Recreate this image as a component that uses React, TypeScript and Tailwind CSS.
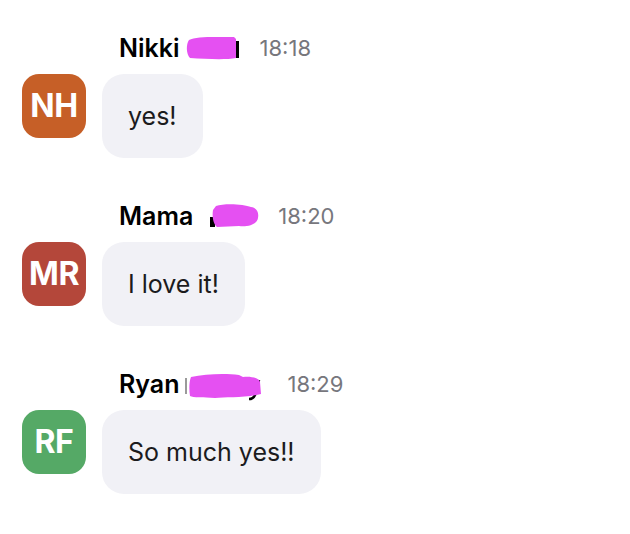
import React from "react";

type Msg = {
  initials: string;
  avatar: string;
  first: string;
  surnameW: number;
  redact: React.ReactNode;
  time: string;
  text: string;
};

const PINK = "#e550f2";

const msgs: Msg[] = [
  {
    initials: "NH",
    avatar: "bg-[#c65f27]",
    first: "Nikki",
    surnameW: 54,
    redact: (
      <>
        <rect x="50" y="7" width="3" height="17" fill="#000" />
        <path
          d="M3 6 C10 2 30 3 48 3 L50 5 L50 24 C40 26 20 25 4 24 C0 20 0 10 3 6 Z"
          fill={PINK}
        />
      </>
    ),
    time: "18:18",
    text: "yes!",
  },
  {
    initials: "MR",
    avatar: "bg-[#b4473a]",
    first: "Mama",
    surnameW: 59,
    redact: (
      <>
        <rect x="11" y="15" width="5" height="10" fill="#000" />
        <path
          d="M17 4 C25 1 45 2 52 5 C58 6 60 10 59 16 C58 22 50 25 40 24 L18 25 C14 22 13 14 14 8 Z"
          fill={PINK}
        />
      </>
    ),
    time: "18:20",
    text: "I love it!",
  },
  {
    initials: "RF",
    avatar: "bg-[#55a966]",
    first: "Ryan",
    surnameW: 82,
    redact: (
      <>
        <rect x="0" y="8" width="2" height="16" fill="#9a9a9a" />
        <path d="M74 10 L70 25 Q68 29 64 29" fill="none" stroke="#000" strokeWidth="2.6" />
        <path
          d="M6 7 C20 4 40 3 54 5 L58 7 C66 6 74 8 75 12 L76 24 C60 28 40 27 30 28 C18 27 8 28 5 26 C4 20 4 12 6 7 Z"
          fill={PINK}
        />
      </>
    ),
    time: "18:29",
    text: "So much yes!!",
  },
];

export default function App() {
  return (
    <div
      className="min-h-[534px] w-[630px] bg-white pl-[22px] pt-[34px]"
      style={{ fontFamily: "Inter, 'Liberation Sans', sans-serif" }}
    >
      <div className="flex flex-col gap-[44px]">
        {msgs.map((m) => (
          <div
            key={m.time}
            className="grid grid-cols-[64px_auto] grid-rows-[29px_auto] justify-start gap-x-4 gap-y-[11px]"
          >
            <div className="col-start-2 row-start-1 flex items-center gap-[6px] pl-[17px] text-[25px] leading-[29px]">
              <span className="font-semibold text-black">{m.first}</span>
              <svg
                width={m.surnameW}
                height="29"
                viewBox={`0 0 ${m.surnameW} 29`}
                className="mr-[14px] shrink-0 overflow-visible"
              >
                {m.redact}
              </svg>
              <span className="text-[22px] text-[#77777d]">{m.time}</span>
            </div>
            <div
              className={`col-start-1 row-start-2 flex h-[64px] w-[64px] items-center justify-center rounded-[17px] ${m.avatar} text-[32px] font-bold tracking-[-0.5px] text-white`}
            >
              {m.initials}
            </div>
            <div className="col-start-2 row-start-2 justify-self-start rounded-[22px] bg-[#f1f1f6] px-[26px] py-[27px] text-[25px] leading-[30px] text-[#1b1b1d]">
              {m.text}
            </div>
          </div>
        ))}
      </div>
    </div>
  );
}
